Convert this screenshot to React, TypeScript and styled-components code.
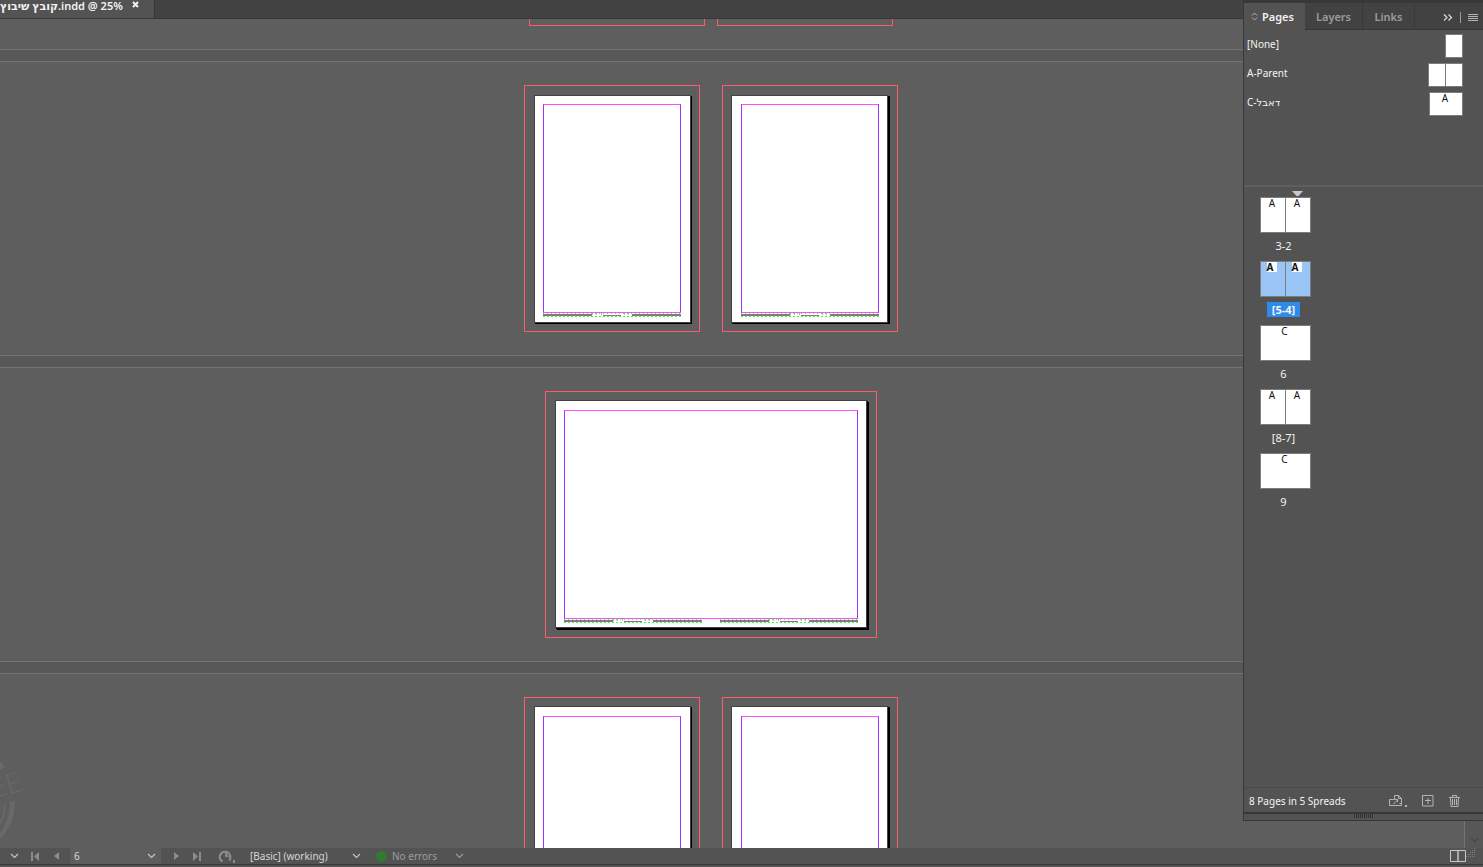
import React from 'react';
import styled, { createGlobalStyle, css } from 'styled-components';

const ui = `"Noto Sans", "DejaVu Sans", "Liberation Sans", sans-serif`;

const GlobalStyle = createGlobalStyle`
  * { box-sizing: border-box; }
  html, body { margin: 0; background: #5e5e5e; }
  body { font: 10px/14px ${ui}; color: #f4f4f4; }
  button, input { font: inherit; color: inherit; background: none; border: 0; padding: 0; margin: 0; border-radius: 0; outline: 0; }
  button { display: flex; align-items: center; }
  svg { display: block; flex: none; }
  h1, p, ul { margin: 0; padding: 0; font: inherit; list-style: none; }
`;

const Shell = styled.div`
  position: relative;
  display: flex;
  flex-direction: column;
  height: 100vh;
  overflow: hidden;
`;

/* Document tab strip */
const TabStrip = styled.header`
  display: flex;
  flex: none;
  height: 19px;
  background: #424242;
  border-bottom: 1px solid #383838;
`;
const DocumentTab = styled.div`
  display: flex;
  align-items: flex-start;
  justify-content: space-between;
  width: 155px;
  padding-right: 15px;
  background: #535353;
  border-right: 1px solid #383838;
  color: #f2f2f2;
`;
const DocumentName = styled.h1`
  && { font-weight: 600; font-size: 11px; line-height: 12px; }
  white-space: nowrap;
`;
const CloseButton = styled.button`
  height: 9px;
`;

/* Pasteboard */
const Workspace = styled.div`
  position: relative;
  display: flex;
  flex: 1;
  min-height: 0;
`;
const Pasteboard = styled.main`
  flex: 1;
  overflow: hidden;
  background: #5e5e5e;
`;
const ScrollTrack = styled.div`
  display: flex;
  align-items: flex-end;
  justify-content: center;
  width: 19px;
  padding-bottom: 5px;
  border-left: 1px solid #747474;
  background: #575757;
`;
const Spread = styled.section<{ $gap: number; $top: number; $height: number }>`
  display: flex;
  justify-content: center;
  gap: ${p => p.$gap}px;
  height: ${p => p.$height}px;
  padding: ${p => p.$top}px 42px 0 0;
  overflow: hidden;
`;
const SpreadBand = styled.div`
  height: 13px;
  background: #585858;
  border: solid #747474;
  border-width: 1px 0;
`;
const Bleed = styled.div<{ $wide?: boolean; $tail?: boolean; $pad: string }>`
  flex: none;
  width: ${p => (p.$wide ? 332 : 176)}px;
  height: ${p => (p.$tail ? 7 : 247)}px;
  padding: ${p => p.$pad};
  border: 1px solid #ff5a6a;
  ${p => p.$tail && css`border-top: 0;`}
`;
const Paper = styled.div<{ $pad: string; $shadow: string }>`
  height: 228px;
  padding: ${p => p.$pad};
  background: #fff;
  border: 1px solid #424242;
  box-shadow: ${p => p.$shadow};
`;
const Margin = styled.div`
  height: 209px;
  border: 1px solid #9933ff;
  border-top-color: #ff4dff;
  border-bottom-color: #ff4dff;
`;
const Slugs = styled.div`
  display: flex;
  justify-content: space-between;
`;
const Watermark = styled.svg`
  position: absolute;
  left: 0;
  bottom: 0;
`;

/* Status bar */
const StatusBar = styled.footer`
  display: flex;
  flex: none;
  align-items: center;
  height: 19px;
  padding: 0 1px 3px 10px;
  background: linear-gradient(#535353 16px, #383838 16px, #383838 17px, #535353 17px);
  color: #d6d6d6;
`;
const NavButton = styled.button<{ $width: number }>`
  justify-content: center;
  width: ${p => p.$width}px;
  height: 16px;
`;
const PageField = styled.label`
  display: flex;
  align-items: center;
  width: 91px;
  height: 16px;
  padding: 0 5px 0 4px;
  background: #5e5e5e;
  border-radius: 2px;
`;
const PageInput = styled.input`
  flex: 1;
  min-width: 0;
  height: 14px;
`;
const StatusButton = styled.button<{ $width: number; $dim?: boolean }>`
  justify-content: space-between;
  width: ${p => p.$width}px;
  font-size: 10px;
  color: ${p => (p.$dim ? '#9c9c9c' : '#d6d6d6')};
`;
const ErrorState = styled.span`
  display: flex;
  align-items: center;
  gap: 5px;
`;
const ErrorDot = styled.span`
  width: 11px;
  height: 11px;
  border-radius: 50%;
  background: #327a32;
`;
const Spacer = styled.div`
  flex: 1;
`;

/* Floating Pages panel */
const Panel = styled.aside`
  position: absolute;
  top: 0;
  right: 0;
  bottom: 46px;
  display: flex;
  flex-direction: column;
  width: 240px;
  background: #535353;
  border: solid #383838;
  border-width: 3px 0 1px 1px;
`;
const PanelTabs = styled.nav`
  display: flex;
  flex: none;
  height: 27px;
  background: #424242;
`;
const PanelTab = styled.button<{ $active?: boolean; $width: number }>`
  justify-content: center;
  gap: 4px;
  width: ${p => p.$width}px;
  padding: ${p => (p.$active ? '0 4px 0 0' : '2px 0 0')};
  font-weight: 600;
  font-size: 11px;
  color: ${p => (p.$active ? '#f2f2f2' : '#9c9c9c')};
  background: ${p => (p.$active ? '#535353' : 'none')};
  border: solid #383838;
  border-width: 0 ${p => (p.$active ? 0 : 1)}px ${p => (p.$active ? 0 : 1)}px 0;
`;
const PanelActions = styled.div`
  display: flex;
  flex: 1;
  align-items: center;
  justify-content: flex-end;
  gap: 7px;
  padding: 2px 5px 0 0;
  border-bottom: 1px solid #383838;
`;
const ActionRule = styled.span`
  width: 1px;
  height: 11px;
  background: #9c9c9c;
`;
const Parents = styled.ul`
  && { padding: 2px 20px 0 3px; }
  flex: none;
  height: 157px;
  border-bottom: 2px solid #5e5e5e;
`;
const ParentRow = styled.li`
  display: flex;
  align-items: flex-start;
  justify-content: space-between;
  height: 29px;
  padding-top: 2px;
`;
const ParentName = styled.span`
  padding-top: 3px;
`;
const Thumb = styled.span<{ $width: number; $height: number }>`
  display: flex;
  width: ${p => p.$width}px;
  height: ${p => p.$height}px;
  border: 1px solid #7d7d7d;
`;
const Leaf = styled.span<{ $selected?: boolean }>`
  flex: 1;
  padding-right: 2px;
  background: ${p => (p.$selected ? '#99c5f7' : '#fff')};
  color: #111;
  font-size: 10px;
  font-weight: ${p => (p.$selected ? 700 : 400)};
  line-height: 11px;
  text-align: center;
  & + & { border-left: 1px solid #7d7d7d; }
`;
const LeafMark = styled.span<{ $selected?: boolean }>`
  display: inline-block;
  height: 10px;
  line-height: 11px;
  ${p => p.$selected && css`background: #fff; padding: 0 4px 0 0;`}
`;
const SpreadList = styled.ul`
  position: relative;
  flex: 1;
  min-height: 0;
  && { padding: 10px 16px 0; }
`;
const SpreadItem = styled.li`
  display: flex;
  height: 64px;
`;
const SpreadButton = styled.button`
  flex-direction: column;
  gap: 5px;
`;
const SpreadLabel = styled.span<{ $selected?: boolean }>`
  height: 15px;
  margin-right: 4px;
  padding: 0 5px;
  font-size: 11px;
  line-height: 15px;
  font-weight: ${p => (p.$selected ? 700 : 400)};
  background: ${p => (p.$selected ? '#2d8ceb' : 'none')};
`;
const CurrentMarker = styled.svg`
  position: absolute;
  top: 4px;
  left: 48px;
`;
const PanelFooter = styled.div`
  display: flex;
  flex: none;
  align-items: center;
  gap: 15px;
  height: 25px;
  padding: 1px 23px 0 5px;
  border-top: 1px solid #4b4b4b;
`;
const PageCount = styled.p`
  flex: 1;
`;
const Grip = styled.div`
  display: flex;
  flex: none;
  justify-content: center;
  height: 8px;
  border-top: 2px solid #383838;
`;

function Chevron({ color = '#c8c8c8' }: { color?: string }) {
  return (
    <svg width="9" height="6" viewBox="0 0 9 6" fill="none" stroke={color} strokeWidth="1.1">
      <path d="M1 1l3.5 3.5L8 1" />
    </svg>
  );
}

function SlugLine() {
  return (
    <svg width="138" height="4" viewBox="0 0 138 4" shapeRendering="crispEdges" stroke="none">
      <path d="M0 .5h138" fill="none" stroke="#55f055" strokeDasharray="1 3" />
      <path d="M0 3.5h138" fill="none" stroke="#55f055" strokeDasharray="2 2" />
      <path d="M0 1h49v2H0zM60 2h18v1H60zM89 1h49v2H89z" fill="#7d7d7d" />
      <path d="M49.500 0v3M53.500 0v3M58.500 0v3M81.500 0v3M85.500 0v3" fill="none" stroke="#55f055" strokeDasharray="2 1" />
    </svg>
  );
}

type SheetProps = { bleed: string; page: string; shadow: string; wide?: boolean };

function Sheet({ bleed, page, shadow, wide }: SheetProps) {
  return (
    <Bleed $wide={wide} $pad={bleed}>
      <Paper $pad={page} $shadow={shadow}>
        <Margin />
        <Slugs>
          <SlugLine />
          {wide && <SlugLine />}
        </Slugs>
      </Paper>
    </Bleed>
  );
}

function FacingPages({ top, inset }: { top: number; inset: number }) {
  return (
    <>
      <Sheet bleed={`${top}px 8px 0 9px`} page={`${inset}px 9px 0 8px`} shadow="1px 1px 0 #000" />
      <Sheet bleed={`${top}px 9px 0 8px`} page={`${inset}px 8px 0 9px`} shadow="1px 1px 0 #000, 2px 1px 0 #000" />
    </>
  );
}

const parents = [
  { name: '[None]', width: 18, leaves: [''] },
  { name: 'A-Parent', width: 35, leaves: ['', ''] },
  { name: 'C-דאבל', width: 34, leaves: ['A'] },
];

const spreads = [
  { label: '3-2', leaves: ['A', 'A'] },
  { label: '[5-4]', leaves: ['A', 'A'], selected: true },
  { label: '6', leaves: ['C'] },
  { label: '[8-7]', leaves: ['A', 'A'] },
  { label: '9', leaves: ['C'] },
];

function PagesPanel() {
  return (
    <Panel aria-label="Pages">
      <PanelTabs>
        <PanelTab $active $width={61}>
          <svg width="7" height="9" viewBox="0 0 7 9" fill="none" stroke="#b4b4b4">
            <path d="M1 3.500L3.500 1 6 3.500M1 5.500L3.500 8 6 5.500" />
          </svg>
          Pages
        </PanelTab>
        <PanelTab $width={58}>Layers</PanelTab>
        <PanelTab $width={52}>Links</PanelTab>
        <PanelActions>
          <button aria-label="Collapse panel">
            <svg width="10" height="7" viewBox="0 0 10 7" fill="none" stroke="#d6d6d6" strokeWidth="1.3">
              <path d="M1 .5l3 3-3 3M5.500 .5l3 3-3 3" />
            </svg>
          </button>
          <ActionRule />
          <button aria-label="Panel menu">
            <svg width="10" height="7" viewBox="0 0 10 7" stroke="#b4b4b4" shapeRendering="crispEdges">
              <path d="M0 .5h10M0 2.500h10M0 4.500h10M0 6.500h10" />
            </svg>
          </button>
        </PanelActions>
      </PanelTabs>
      <Parents>
        {parents.map(p => (
          <ParentRow key={p.name}>
            <ParentName>{p.name}</ParentName>
            <Thumb $width={p.width} $height={24}>
              {p.leaves.map((mark, i) => (
                <Leaf key={i}>{mark}</Leaf>
              ))}
            </Thumb>
          </ParentRow>
        ))}
      </Parents>
      <SpreadList>
        <CurrentMarker width="11" height="6" viewBox="0 0 11 6">
          <path d="M0 0h11L6.500 5h-2z" fill="#c8c8c8" />
        </CurrentMarker>
        {spreads.map(s => (
          <SpreadItem key={s.label}>
            <SpreadButton>
              <Thumb $width={51} $height={36}>
                {s.leaves.map((mark, i) => (
                  <Leaf key={i} $selected={s.selected}>
                    <LeafMark $selected={s.selected}>{mark}</LeafMark>
                  </Leaf>
                ))}
              </Thumb>
              <SpreadLabel $selected={s.selected}>{s.label}</SpreadLabel>
            </SpreadButton>
          </SpreadItem>
        ))}
      </SpreadList>
      <PanelFooter>
        <PageCount>8 Pages in 5 Spreads</PageCount>
        <button aria-label="Edit page size">
          <svg width="18" height="12" viewBox="0 0 18 12" fill="none" stroke="#b4b4b4">
            <path d="M5.500 4.500H.5v6h12v-2M5.500 4.500v-4h4l3 3v5h-2M9.500 .5v3h3M4.500 9l4-4M6 4.500h2.500V7" />
            <path d="M16 10h2v2h-2z" fill="#b4b4b4" stroke="none" />
          </svg>
        </button>
        <button aria-label="Create new page">
          <svg width="12" height="12" viewBox="0 0 12 12" fill="none" stroke="#b4b4b4">
            <path d="M.5 .5h10.500v10.500H.5zM3 5.500h6M6 3v6" />
          </svg>
        </button>
        <button aria-label="Delete selected pages">
          <svg width="11" height="12" viewBox="0 0 11 12" fill="none" stroke="#b4b4b4">
            <path d="M0 2.500h11M3.500 2V.5h4V2M1.500 3l.5 8.500h7l.5-8.500M3.500 4v6M5.500 4v6M7.500 4v6" />
          </svg>
        </button>
      </PanelFooter>
      <Grip>
        <svg width="20" height="4" viewBox="0 0 20 4" stroke="#333" shapeRendering="crispEdges">
          <path d="M0 2h20" strokeWidth="4" strokeDasharray="1 1" />
        </svg>
      </Grip>
    </Panel>
  );
}

export default function App() {
  return (
    <Shell>
      <GlobalStyle />
      <TabStrip>
        <DocumentTab>
          <DocumentName>קובץ שיבוץ.indd @ 25%</DocumentName>
          <CloseButton aria-label="Close document">
            <svg width="7" height="7" viewBox="0 0 7 7" stroke="#f2f2f2" strokeWidth="2">
              <path d="M1 1l5 5M6 1L1 6" />
            </svg>
          </CloseButton>
        </DocumentTab>
      </TabStrip>
      <Workspace>
        <Pasteboard>
          <Spread $gap={12} $top={0} $height={30}>
            <Bleed $tail $pad="0" />
            <Bleed $tail $pad="0" />
          </Spread>
          <SpreadBand />
          <Spread $gap={22} $top={23} $height={293}>
            <FacingPages top={9} inset={8} />
          </Spread>
          <SpreadBand />
          <Spread $gap={22} $top={23} $height={293}>
            <Sheet wide bleed="8px 9px 0 9px" page="9px 8px 0 8px" shadow="1px 1px 0 #000, 2px 2px 0 #000" />
          </Spread>
          <SpreadBand />
          <Spread $gap={22} $top={23} $height={293}>
            <FacingPages top={8} inset={9} />
          </Spread>
        </Pasteboard>
        <Watermark width="40" height="100" viewBox="0 0 40 100" fill="#696969">
          <path d="M0 13l5 6-5 3z" />
          <text x="-7" y="51" fontFamily="Lato" fontWeight="300" fontSize="28" transform="rotate(-16 -7 51)" fill="#696969">EE</text>
          <path d="M10 54l5-2c0 16-5 29-15 39v-6c7-9 10-19 10-31zM4 56l1.500-.5C5.500 65 4 71 0 76v-3c3-5 4-10 4-17z" />
        </Watermark>
        <ScrollTrack>
          <Chevron color="#484848" />
        </ScrollTrack>
      </Workspace>
      <StatusBar>
        <NavButton $width={9} aria-label="Zoom options"><Chevron /></NavButton>
        <NavButton $width={32} aria-label="First page">
          <svg width="8" height="9" viewBox="0 0 8 9" fill="#8c8c8c"><path d="M0 0h2v9H0zM8 0v9L3 4.500z" /></svg>
        </NavButton>
        <NavButton $width={10} aria-label="Previous page">
          <svg width="5" height="8" viewBox="0 0 5 8" fill="#8c8c8c"><path d="M5 0v8L0 4z" /></svg>
        </NavButton>
        <NavButton $width={9} as="span" />
        <PageField>
          <PageInput defaultValue="6" aria-label="Page number" />
          <Chevron />
        </PageField>
        <NavButton $width={30} aria-label="Next page">
          <svg width="5" height="8" viewBox="0 0 5 8" fill="#8c8c8c"><path d="M0 0v8l5-4z" /></svg>
        </NavButton>
        <NavButton $width={12} aria-label="Last page">
          <svg width="8" height="9" viewBox="0 0 8 9" fill="#8c8c8c"><path d="M6 0h2v9H6zM0 0v9l5-4.500z" /></svg>
        </NavButton>
        <NavButton $width={47} aria-label="Open menu">
          <svg width="17" height="13" viewBox="0 0 17 13" fill="none" stroke="#8c8c8c">
            <path d="M4.500 11.500A5.200 5.200 0 1 1 12 8.500v2" strokeWidth="2.200" />
            <path d="M7.500 3v3.500h3z" fill="#8c8c8c" />
            <path d="M15 10h2v3h-2z" fill="#8c8c8c" stroke="none" />
          </svg>
        </NavButton>
        <StatusButton $width={111}>
          [Basic] (working)
          <Chevron />
        </StatusButton>
        <NavButton $width={15} as="span" />
        <StatusButton $width={88} $dim>
          <ErrorState><ErrorDot />No errors</ErrorState>
          <Chevron color="#9c9c9c" />
        </StatusButton>
        <Spacer />
        <NavButton $width={16} aria-label="Split layout view">
          <svg width="16" height="12" viewBox="0 0 16 12" fill="none" stroke="#c8c8c8">
            <path d="M.5 .5h15v11H.5z" /><path d="M8 1v10" stroke="#a8a8a8" strokeWidth="2" />
          </svg>
        </NavButton>
        <NavButton $width={16} as="span">
          <svg width="9" height="9" viewBox="0 0 9 9" fill="#7d7d7d" shapeRendering="crispEdges">
            <path d="M8 0h1v1H8zM6 2h1v1H6zM8 2h1v1H8zM4 4h1v1H4zM6 4h1v1H6zM8 4h1v1H8zM2 6h1v1H2zM4 6h1v1H4zM6 6h1v1H6zM8 6h1v1H8zM0 8h1v1H0zM2 8h1v1H2zM4 8h1v1H4zM6 8h1v1H6zM8 8h1v1H8z" />
          </svg>
        </NavButton>
      </StatusBar>
      <PagesPanel />
    </Shell>
  );
}
